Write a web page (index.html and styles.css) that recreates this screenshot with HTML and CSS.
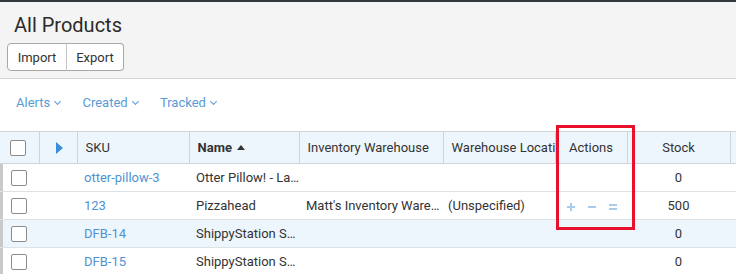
FILE: index.html
```html
<!DOCTYPE html>
<html lang="en">
<head>
    <meta charset="UTF-8" />
    <title>All Products</title>
    <link rel="stylesheet" href="styles.css">
</head>
<body>
    <div id="page">
        <div class="page-head">
            <h1>All Products</h1>
            <div class="btn-group">
                <button>Import</button>
                <button>Export</button>
            </div>
        </div>

        <div class="filters">
            <a>Alerts <span class="chev"></span></a>
            <a>Created <span class="chev"></span></a>
            <a>Tracked <span class="chev"></span></a>
        </div>

        <table id="products">
            <colgroup>
                <col style="width: 39px">
                <col style="width: 38px">
                <col style="width: 112px">
                <col style="width: 110px">
                <col style="width: 144px">
                <col style="width: 112px">
                <col style="width: 72px">
                <col style="width: 103px">
                <col>
            </colgroup>
            <thead>
                <tr>
                    <th class="check"><span class="box"></span></th>
                    <th class="expand"><span class="play"></span></th>
                    <th>SKU</th>
                    <th class="sorted">Name <span class="up"></span></th>
                    <th>Inventory Warehouse</th>
                    <th class="clip">Warehouse Location</th>
                    <th class="center">Actions</th>
                    <th class="center">Stock</th>
                    <th class="rest"></th>
                </tr>
            </thead>
            <tbody>
                <tr>
                    <td class="check"><span class="box"></span></td>
                    <td></td>
                    <td><a>otter-pillow-3</a></td>
                    <td>Otter Pillow! - La…</td>
                    <td></td>
                    <td></td>
                    <td></td>
                    <td class="center">0</td>
                    <td></td>
                </tr>
                <tr>
                    <td class="check"><span class="box"></span></td>
                    <td></td>
                    <td><a>123</a></td>
                    <td>Pizzahead</td>
                    <td>Matt's Inventory Ware…</td>
                    <td class="loc">(Unspecified)</td>
                    <td class="actions">
                        <svg width="10" height="10" viewBox="0 0 10 10"><path d="M5 1v8M1 5h8" /></svg>
                        <svg width="10" height="10" viewBox="0 0 10 10"><path d="M1 5h8" /></svg>
                        <svg width="10" height="10" viewBox="0 0 10 10"><path d="M1 3h8M1 7h8" /></svg>
                    </td>
                    <td class="center">500</td>
                    <td></td>
                </tr>
                <tr class="hl">
                    <td class="check"><span class="box"></span></td>
                    <td></td>
                    <td><a>DFB-14</a></td>
                    <td>ShippyStation S…</td>
                    <td></td>
                    <td></td>
                    <td></td>
                    <td class="center">0</td>
                    <td></td>
                </tr>
                <tr>
                    <td class="check"><span class="box"></span></td>
                    <td></td>
                    <td><a>DFB-15</a></td>
                    <td>ShippyStation S…</td>
                    <td></td>
                    <td></td>
                    <td></td>
                    <td class="center">0</td>
                    <td></td>
                </tr>
            </tbody>
        </table>

        <div class="callout"></div>
    </div>
</body>
</html>
```

FILE: styles.css
```css
body {
    margin: 0;
    font-family: Roboto, "Liberation Sans", sans-serif;
    font-size: 13px;
    color: #333;
    background: #fff;
}

#page {
    position: relative;
    width: 736px;
    height: 274px;
    overflow: hidden;
}

.page-head {
    background: #f4f4f4;
    border-top: 2px solid #33383c;
    border-bottom: 1px solid #d4d4d4;
    padding: 11px 0 7px 7px;
}

    .page-head h1 {
        margin: 0 0 6px 7px;
        font-size: 20px;
        line-height: 24px;
        font-weight: 400;
        color: #2b2b2b;
    }

.btn-group {
    display: flex;
}

    .btn-group button {
        box-sizing: border-box;
        height: 28px;
        padding: 0;
        font-family: inherit;
        font-size: 13px;
        color: #333;
        background: #fff;
        border: 1px solid #a8a8a8;
        cursor: pointer;
    }

    .btn-group button:first-child {
        width: 60px;
        border-radius: 4px 0 0 4px;
    }

    .btn-group button:last-child {
        width: 58px;
        border-left: 1px solid #c4c4c4;
        border-radius: 0 4px 4px 0;
        margin-left: -1px;
    }

.filters {
    display: flex;
    gap: 22px;
    padding: 16px 16px 20px;
    line-height: 16px;
}

    .filters a {
        color: #5a9bd6;
    }

.chev {
    display: inline-block;
    width: 4px;
    height: 4px;
    margin: 0 0 3px 2px;
    border-right: 1px solid #5a9bd6;
    border-bottom: 1px solid #5a9bd6;
    transform: rotate(45deg);
}

#products {
    width: 736px;
    table-layout: fixed;
    border-collapse: collapse;
}

    #products th {
        height: 31px;
        padding: 0 8px;
        text-align: left;
        font-weight: 400;
        background: #eef6fd;
        border-top: 1px solid #cfd4d8;
        border-bottom: 1px solid #cfd4d8;
        border-right: 1px solid #cfd4d8;
        white-space: nowrap;
        overflow: hidden;
    }

    #products th.rest {
        border-right: none;
    }

    #products th.clip {
        padding-right: 0;
        text-overflow: clip;
    }

    #products th.sorted {
        font-weight: 700;
    }

    #products td {
        height: 27px;
        padding: 0 8px 0 7px;
        border-bottom: 1px solid #dde2e6;
        white-space: nowrap;
        overflow: hidden;
    }

    #products td a {
        color: #4f92d1;
    }

    #products td.loc {
        padding-left: 5px;
    }

    #products tbody tr td:first-child {
        box-shadow: inset 3px 0 0 #c9c9c9;
    }

    #products tr.hl td {
        background: #eef6fd;
    }

    #products .center {
        text-align: center;
        padding: 0;
    }

    #products th.check {
        padding-left: 10px;
    }

    #products td.check {
        padding-left: 11px;
    }

.box {
    display: block;
    width: 14px;
    height: 14px;
    border: 1px solid #8c8c8c;
    border-radius: 2px;
    background: #fff;
}

.play {
    display: block;
    width: 0;
    height: 0;
    margin-left: 8px;
    border-top: 6px solid transparent;
    border-bottom: 6px solid transparent;
    border-left: 7px solid #3b8ed8;
}

.up {
    display: inline-block;
    width: 0;
    height: 0;
    margin: 0 0 2px 2px;
    border-left: 4px solid transparent;
    border-right: 4px solid transparent;
    border-bottom: 5px solid #333;
}

#products td.actions {
    padding-left: 11px;
}

    .actions svg {
        margin-right: 8px;
        vertical-align: middle;
        fill: none;
        stroke: #a9cced;
        stroke-width: 2;
    }

.callout {
    position: absolute;
    left: 556px;
    top: 125px;
    width: 73px;
    height: 99px;
    border: 3px solid #e8102a;
}
```
